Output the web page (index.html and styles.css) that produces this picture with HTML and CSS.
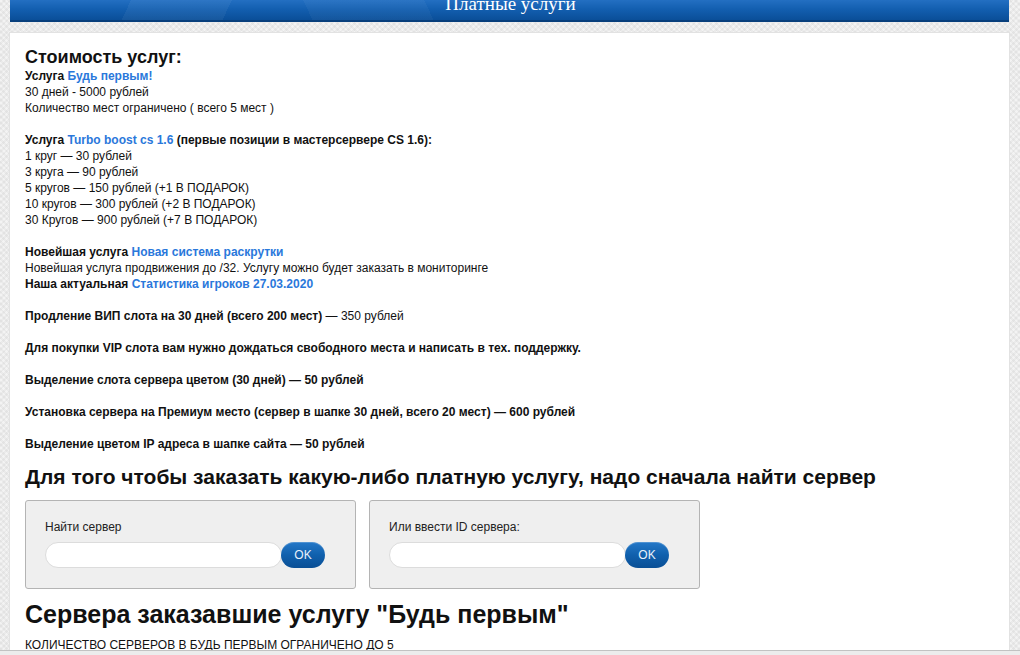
FILE: index.html
```html
<!DOCTYPE html>
<html lang="ru">
<head>
<meta charset="utf-8">
<title>Платные услуги</title>
<link rel="stylesheet" href="styles.css">
</head>
<body>
<div class="page">
  <div class="header">
    <div class="header-title">Платные услуги</div>
  </div>
  <div class="panel">
    <h3 class="price-title">Стоимость услуг:</h3>
    <p><b>Услуга <a href="#">Будь первым!</a></b><br>30 дней - 5000 рублей<br>Количество мест ограничено ( всего 5 мест )</p>
    <p><b>Услуга <a href="#">Turbo boost cs 1.6</a> (первые позиции в мастерсервере CS 1.6):</b><br>1 круг — 30 рублей<br>3 круга — 90 рублей<br>5 кругов — 150 рублей (+1 В ПОДАРОК)<br>10 кругов — 300 рублей (+2 В ПОДАРОК)<br>30 Кругов — 900 рублей (+7 В ПОДАРОК)</p>
    <p><b>Новейшая услуга <a href="#">Новая система раскрутки</a></b><br>Новейшая услуга продвижения до /32. Услугу можно будет заказать в мониторинге<br><b>Наша актуальная <a href="#">Статистика игроков 27.03.2020</a></b></p>
    <p><b>Продление ВИП слота на 30 дней (всего 200 мест)</b> — 350 рублей</p>
    <p><b>Для покупки VIP слота вам нужно дождаться свободного места и написать в тех. поддержку.</b></p>
    <p><b>Выделение слота сервера цветом (30 дней) — 50 рублей</b></p>
    <p><b>Установка сервера на Премиум место (сервер в шапке 30 дней, всего 20 мест) — 600 рублей</b></p>
    <p><b>Выделение цветом IP адреса в шапке сайта — 50 рублей</b></p>
    <h2 class="order-title">Для того чтобы заказать какую-либо платную услугу, надо сначала найти сервер</h2>
    <div class="forms">
      <form class="search-box">
        <label class="search-label">Найти сервер</label>
        <div class="search-row">
          <input class="search-input" type="text">
          <button class="ok-btn" type="button">OK</button>
        </div>
      </form>
      <form class="search-box">
        <label class="search-label">Или ввести ID сервера:</label>
        <div class="search-row">
          <input class="search-input" type="text">
          <button class="ok-btn" type="button">OK</button>
        </div>
      </form>
    </div>
    <h2 class="servers-title">Сервера заказавшие услугу "Будь первым"</h2>
    <p class="limit">КОЛИЧЕСТВО СЕРВЕРОВ В БУДЬ ПЕРВЫМ ОГРАНИЧЕНО ДО 5</p>
  </div>
</div>
<div class="bottom-line"></div>
</body>
</html>
```
FILE: styles.css
```css
html, body {
  margin: 0;
  padding: 0;
}
body {
  font-family: "Liberation Sans", Arial, sans-serif;
  font-size: 12px;
  line-height: 16px;
  color: #111;
  background-color: #f3f3f3;
  background-image:
    repeating-linear-gradient(45deg, rgba(0,0,0,0.035) 0 2px, transparent 2px 4px),
    repeating-linear-gradient(-45deg, rgba(0,0,0,0.035) 0 2px, transparent 2px 4px);
  height: 655px;
  overflow: hidden;
}
.page {
  width: 1001px;
  margin: 0 0 0 9px;
}
.header {
  height: 22px;
  margin-left: 1px;
  width: 999px;
  overflow: hidden;
  background:
    linear-gradient(115deg, transparent 0 12%, rgba(255,255,255,0.05) 12% 22%, transparent 22% 100%),
    linear-gradient(65deg, transparent 0 30%, rgba(255,255,255,0.04) 30% 42%, transparent 42% 100%),
    linear-gradient(to bottom, #236fc2 0%, #135fb0 45%, #0a4e98 100%);
  border-bottom: 2px solid #083f7c;
  box-sizing: border-box;
  text-align: center;
}
.header-title {
  font-family: "Liberation Serif", "Times New Roman", serif;
  font-size: 19px;
  line-height: 19px;
  color: #fff;
  margin-top: -6px;
  padding-left: 2px;
}
.panel {
  margin-top: 10px;
  background: #fff;
  border: 1px solid #e2e2e2;
  border-bottom: none;
  padding: 13px 15px 0 15px;
  height: 640px;
  box-sizing: border-box;
}
a {
  color: #2a78db;
  text-decoration: none;
}
b a { font-weight: bold; }
p {
  margin: 0 0 16px 0;
}
.price-title {
  font-size: 18px;
  line-height: 22px;
  font-weight: bold;
  margin: 0;
}
.order-title {
  font-size: 21px;
  line-height: 24px;
  font-weight: bold;
  margin: -3px 0 11px 0;
}
.forms {
  display: flex;
  gap: 13px;
}
.search-box {
  width: 331px;
  height: 89px;
  box-sizing: border-box;
  background: #efefef;
  border: 1px solid #b4b4b4;
  border-radius: 3px;
  padding: 18px 0 0 19px;
  margin: 0;
}
.search-label {
  display: block;
  font-size: 12px;
  line-height: 16px;
  color: #222;
}
.search-row {
  display: flex;
  align-items: center;
  margin-top: 7px;
}
.search-input {
  width: 237px;
  height: 26px;
  box-sizing: border-box;
  border: 1px solid #dcdcdc;
  border-radius: 13px;
  background: #fff;
  margin: 0;
  padding: 0 10px;
  outline: none;
}
.ok-btn {
  width: 44px;
  height: 26px;
  margin-left: -1px;
  border: none;
  border-radius: 13px;
  background: linear-gradient(to bottom, #2478c8 0%, #1060ad 50%, #0a4f95 100%);
  color: #e8f0fa;
  font-family: "Liberation Sans", Arial, sans-serif;
  font-size: 12px;
  padding: 0;
  box-shadow: inset 0 1px 0 rgba(255,255,255,0.2);
}
.servers-title {
  font-size: 25px;
  line-height: 30px;
  font-weight: bold;
  margin: 10px 0 8px 0;
}
.limit {
  margin: 0;
  font-size: 12px;
}
.bottom-line {
  position: fixed;
  left: 0;
  right: 0;
  bottom: 0;
  height: 4px;
  border-top: 1px solid #c2c2c2;
  background: #ececec;
}
```
